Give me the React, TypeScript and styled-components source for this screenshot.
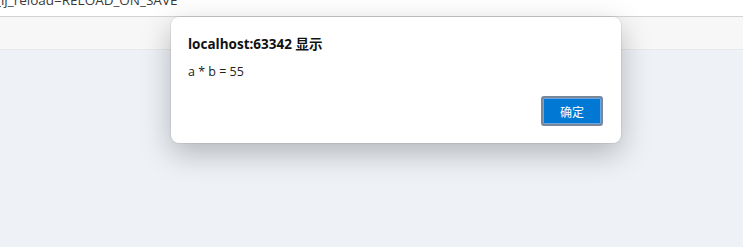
import styled, { createGlobalStyle } from "styled-components";

const Global = createGlobalStyle`
  html, body {
    margin: 0;
    padding: 0;
    background: #eef2f7;
    font-family: "Segoe UI", "Open Sans", "Noto Sans CJK SC", sans-serif;
  }
`;

const Page = styled.div`
  position: relative;
  width: 743px;
  height: 247px;
  overflow: hidden;
  display: flex;
  flex-direction: column;
  background: #eef2f7;
`;

const UrlStrip = styled.div`
  height: 16px;
  background: #ffffff;
  border-bottom: 1px solid #d3d3d3;
  overflow: hidden;
`;

const UrlText = styled.div`
  margin-top: -9px;
  margin-left: -5px;
  font-family: "Open Sans", "Liberation Sans", sans-serif;
  font-size: 13.5px;
  line-height: 18px;
  color: #3a3a3a;
  white-space: nowrap;
`;

const Toolbar = styled.div`
  height: 32px;
  background: #f7f7f7;
  border-bottom: 1px solid #e6e8ea;
`;

const Content = styled.div`
  flex: 1;
  background: #eef2f7;
`;

const Dialog = styled.div`
  position: absolute;
  left: 171px;
  top: 17px;
  width: 450px;
  height: 126px;
  box-sizing: border-box;
  background: #ffffff;
  border-radius: 8px;
  box-shadow: 0 0 0 1px rgba(0, 0, 0, 0.06), 0 10px 30px rgba(0, 0, 0, 0.26);
  padding: 17px 18px 17px 17px;
  display: flex;
  flex-direction: column;
`;

const Title = styled.div`
  font-family: "Open Sans", "Noto Sans CJK SC", sans-serif;
  font-weight: 700;
  font-size: 13.5px;
  line-height: 20px;
  color: #111;
`;

const Message = styled.div`
  margin-top: 9px;
  font-family: "Open Sans", "Noto Sans CJK SC", sans-serif;
  font-size: 12.5px;
  line-height: 18px;
  color: #222;
`;

const Footer = styled.div`
  margin-top: auto;
  display: flex;
  justify-content: flex-end;
`;

const OkButton = styled.button`
  width: 62px;
  height: 30px;
  box-sizing: border-box;
  border: 2px solid #7a8798;
  border-radius: 3px;
  background: #0078d4;
  box-shadow: inset 0 0 0 1px #6aa6e0;
  color: #ffffff;
  font-family: "Noto Sans CJK SC", sans-serif;
  font-size: 12px;
  padding: 0;
`;

export default function App() {
  return (
    <>
      <Global />
      <Page>
        <UrlStrip>
          <UrlText>_ij_reload=RELOAD_ON_SAVE</UrlText>
        </UrlStrip>
        <Toolbar />
        <Content />
        <Dialog>
          <Title>localhost:63342 显示</Title>
          <Message>a * b = 55</Message>
          <Footer>
            <OkButton>确定</OkButton>
          </Footer>
        </Dialog>
      </Page>
    </>
  );
}
